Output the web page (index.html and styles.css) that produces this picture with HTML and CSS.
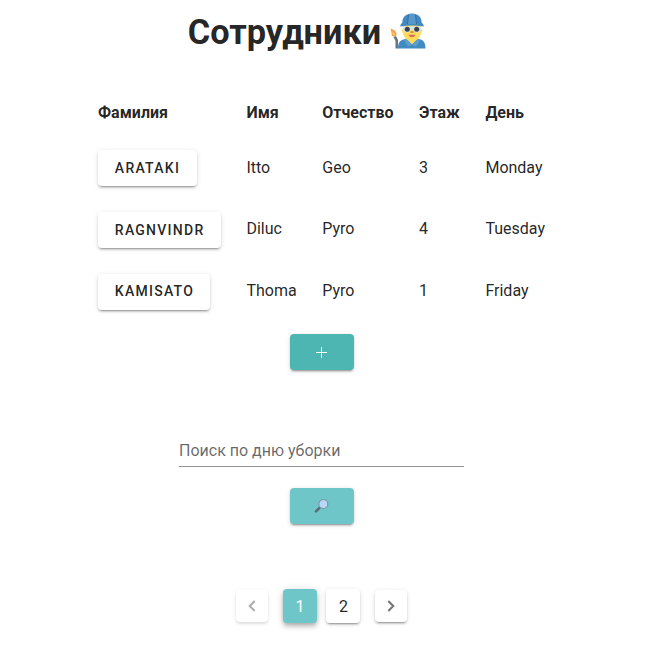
FILE: index.html
```
<!DOCTYPE html>
<html lang="ru">
<head>
<meta charset="utf-8">
<title>Сотрудники</title>
<link rel="stylesheet" href="styles.css">
</head>
<body>
<main class="page">
  <h1 class="title"><span>Сотрудники</span>
    <svg class="worker" viewBox="0 0 36 36" aria-hidden="true">
      <path d="M8 35.500C8 28.500 11 26.500 16 26L19 24.500H25L28 26C33 26.500 35.500 29 35.500 35.500Z" fill="#428bc1"/>
      <path d="M15.500 22H28.500L27.500 26L22 31.500L16.500 26Z" fill="#ffdc5d"/>
      <path d="M15.500 25.500L22 32L28.500 25.500L30 27L26 33.500L22 32L18 33.500L14 27Z" fill="#5aa0d1"/>
      <path d="M13 12H31V16Q33.500 18 31 20Q30 27.500 22 27.500Q14 27.500 13 20Q10.500 18 13 16Z" fill="#ffdc5d"/>
      <path d="M12.300 10C12.300 4 16 .500 22 .500S31.700 4 31.700 10C33.300 10.500 33.700 12 33.700 13.500Q22 11.500 10.300 13.500C10.300 12 10.700 10.500 12.300 10Z" fill="#4289c1"/>
      <path d="M17.500 11L18.500 1.500Q22 0 25.500 1.500L26.500 11Z" fill="#5799ca"/>
      <path d="M18.500 2L17.500 11M25.500 2L26.500 11" fill="none" stroke="#2a6797" stroke-width=".8"/>
      <path d="M13 13.500H31V17Q30 19.500 27 19.500Q24.300 19.500 23.300 17H20.700Q19.700 19.500 17 19.500Q14 19.500 13 17Z" fill="#d7e1e8"/>
      <circle cx="17.300" cy="16.200" r="2.500" fill="#35424b"/><circle cx="26.700" cy="16.200" r="2.500" fill="#35424b"/>
      <path d="M20.500 18H23.500V20H20.500Z" fill="#d98e38"/>
      <path d="M18.500 21.800H25.500Q24.500 24.300 22 24.300T18.500 21.800Z" fill="#d4695a"/>
      <path d="M3.500 24L6 23L8 27V35.500H5.500V28Z" fill="#667580"/>
      <path d="M.500 15.500Q6.500 17 6.500 21Q6.500 23.500 4 23.500Q1.500 23.500 1.500 20Z" fill="#f5a43b"/>
      <path d="M2.500 18.500Q5 20 4.800 22Q3 23 2.500 18.500Z" fill="#ffe08a"/>
    </svg>
  </h1>
  <table class="staff">
    <thead><tr><th>Фамилия</th><th>Имя</th><th>Отчество</th><th>Этаж</th><th>День</th></tr></thead>
    <tbody>
      <tr><td><button class="btn">ARATAKI</button></td><td>Itto</td><td>Geo</td><td>3</td><td>Monday</td></tr>
      <tr><td><button class="btn">RAGNVINDR</button></td><td>Diluc</td><td>Pyro</td><td>4</td><td>Tuesday</td></tr>
      <tr><td><button class="btn">KAMISATO</button></td><td>Thoma</td><td>Pyro</td><td>1</td><td>Friday</td></tr>
    </tbody>
  </table>
  <button class="btn add" aria-label="Добавить"><svg width="12" height="12" viewBox="0 0 12 12"><path d="M5.500 0V11M0 5.500H11" stroke="#fff" stroke-width="1"/></svg></button>
  <div class="field">Поиск по дню уборки</div>
  <button class="btn search" aria-label="Поиск">
    <svg width="16" height="16" viewBox="0 0 16 16"><path d="M2 13.300L5.500 9.800" stroke="#586b78" stroke-width="2.600" stroke-linecap="round"/><circle cx="9.300" cy="6" r="4.500" fill="#b5d8f5" stroke="#8093a5" stroke-width="1.200"/></svg>
  </button>
  <nav class="pages">
    <button class="nav disabled" aria-label="Назад"><svg width="8" height="12" viewBox="0 0 8 12"><path d="M6.700 1L1.700 6L6.700 11" fill="none" stroke="currentColor" stroke-width="2"/></svg></button>
    <button class="item active">1</button>
    <button class="item">2</button>
    <button class="nav" aria-label="Вперёд"><svg width="8" height="12" viewBox="0 0 8 12"><path d="M1.300 1L6.300 6L1.300 11" fill="none" stroke="currentColor" stroke-width="2"/></svg></button>
  </nav>
</main>
</body>
</html>
```
FILE: styles.css
```
* { box-sizing: border-box; }
body {
  margin: 0;
  background: #fff;
  color: rgba(0, 0, 0, .87);
  font: 16px/24px Roboto, sans-serif;
}
button { border: 0; font-family: inherit; color: inherit; }
svg { display: block; }
.page {
  width: 643px;
  padding: 8px 0 24px;
  display: flex;
  flex-direction: column;
  align-items: center;
}
.title {
  display: flex;
  gap: 8.500px;
  margin: 0 29.500px 32px 0;
  font-size: 34.300px;
  line-height: 48px;
  font-weight: 700;
}
.worker { width: 36px; height: 36px; margin-top: 5px; }
.staff { border-collapse: separate; border-spacing: 0; }
.staff th, .staff td {
  padding: 12.800px;
  text-align: left;
  vertical-align: middle;
}
.staff th { padding: 13.200px 12.800px 12.400px; }
.staff td + td { padding: 12.200px 12.800px 13.400px; }
.btn {
  display: flex;
  align-items: center;
  justify-content: center;
  height: 36px;
  min-width: 64px;
  padding: 0 16.400px .400px 16.800px;
  border-radius: 4px;
  background: #fff;
  font-size: 14px;
  font-weight: 500;
  letter-spacing: 1.250px;
}
.btn, .nav, .item {
  box-shadow: 0 3px 1px -2px rgba(0, 0, 0, .2), 0 2px 2px rgba(0, 0, 0, .14), 0 1px 5px rgba(0, 0, 0, .12);
}
.add { margin-top: 11.600px; padding: 3px 16px 0; background: #4db6b2; }
.field {
  width: 285px;
  height: 32px;
  margin-top: 65px;
  padding-top: 4px;
  border-bottom: 1px solid #949494;
  color: rgba(0, 0, 0, .6);
}
.search { margin-top: 21px; padding: 0 16px; background: #6fc6c9; }
.pages {
  display: flex;
  align-items: center;
  gap: 9px;
  margin-top: 65px;
}
.nav, .item {
  display: flex;
  align-items: center;
  justify-content: center;
  padding: 0;
  border-radius: 4px;
  background: #fff;
  font-size: 16px;
}
.nav { width: 32px; height: 32px; margin-left: 6px; color: #757575; }
.nav.disabled { margin: 0 6px 0 0; color: #adadad; box-shadow: 0 2px 2px rgba(0, 0, 0, .08), 0 1px 5px rgba(0, 0, 0, .08); }
.item { width: 34px; height: 34px; padding: 1px 0 0 1px; }
.item.active {
  padding-left: 0;
  background: #6fc6c9;
  color: #fff;
  box-shadow: 0 2px 4px -1px rgba(0, 0, 0, .2), 0 4px 5px rgba(0, 0, 0, .14), 0 1px 10px rgba(0, 0, 0, .12);
}
```
